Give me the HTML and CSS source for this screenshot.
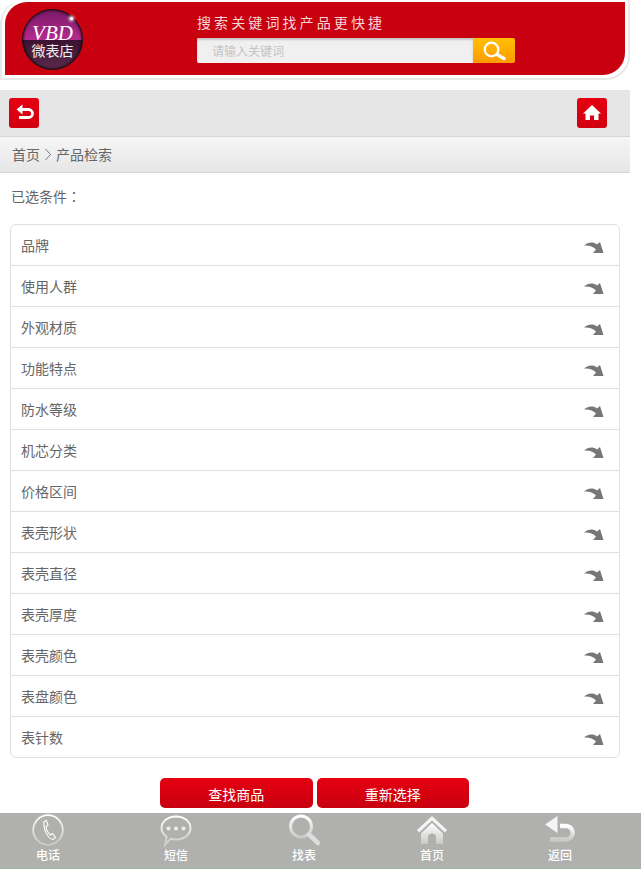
FILE: index.html
```html
<!DOCTYPE html>
<html lang="zh">
<head>
<meta charset="utf-8">
<title>产品检索</title>
<link rel="stylesheet" href="styles.css">
</head>
<body>
<svg class="defs" width="0" height="0">
  <defs>
    <linearGradient id="tabfill" x1="0" y1="0" x2="0" y2="1">
      <stop offset="0" stop-color="#ffffff"/>
      <stop offset="1" stop-color="#c9c9c7"/>
    </linearGradient>
  </defs>
</svg>
<div class="page">
  <header class="header">
    <div class="banner">
      <div class="logo">
        <span class="logo-top">VBD</span>
        <span class="logo-bottom">微表店</span>
        <i class="logo-star"></i>
      </div>
      <div class="search">
        <div class="slogan">搜索关键词找产品更快捷</div>
        <div class="search-row">
          <div class="search-input">请输入关键词</div>
          <div class="search-btn">
            <svg width="30" height="22" viewBox="0 0 30 22"><circle cx="12.5" cy="9.5" r="6.8" fill="none" stroke="#fff" stroke-width="2.2"/><path d="M18 14.500L25 18.500" stroke="#fff" stroke-width="3.400" stroke-linecap="round"/></svg>
          </div>
        </div>
      </div>
    </div>
  </header>

  <nav class="toolbar">
    <a class="tool-btn"><svg width="30" height="30" viewBox="0 0 30 30"><path d="M11 11.500H19.500A4 4 0 0 1 19.500 19.500H10" fill="none" stroke="#fff" stroke-width="2.800"/><path d="M13.500 6.500V16.500L7.500 11.500Z" fill="#fff"/></svg></a>
    <a class="tool-btn"><svg width="30" height="30" viewBox="0 0 30 30"><path d="M15 7L24 15.500H21.500V22H17V17.500H13V22H8.500V15.500H6Z" fill="#fff"/></svg></a>
  </nav>

  <div class="crumb"><span>首页</span><svg class="crumb-sep" width="8" height="13" viewBox="0 0 8 13"><path d="M1.500 1L6.500 6.500L1.500 12" fill="none" stroke="#777" stroke-width="1"/></svg><span>产品检索</span></div>

  <div class="chosen">已选条件<span class="colon" lang="zh-Hant">：</span></div>

  <ul class="filters">
    <li class="filter"><span>品牌</span><svg class="arrow" width="20" height="13" viewBox="0 0 20 13"><path d="M0 4.500C4 1 9 .5 13 3.500L16 1L19.500 12L9 12L12 8.500C9 5.500 5 4 0 4.500Z"/></svg></li>
    <li class="filter"><span>使用人群</span><svg class="arrow" width="20" height="13" viewBox="0 0 20 13"><path d="M0 4.500C4 1 9 .5 13 3.500L16 1L19.500 12L9 12L12 8.500C9 5.500 5 4 0 4.500Z"/></svg></li>
    <li class="filter"><span>外观材质</span><svg class="arrow" width="20" height="13" viewBox="0 0 20 13"><path d="M0 4.500C4 1 9 .5 13 3.500L16 1L19.500 12L9 12L12 8.500C9 5.500 5 4 0 4.500Z"/></svg></li>
    <li class="filter"><span>功能特点</span><svg class="arrow" width="20" height="13" viewBox="0 0 20 13"><path d="M0 4.500C4 1 9 .5 13 3.500L16 1L19.500 12L9 12L12 8.500C9 5.500 5 4 0 4.500Z"/></svg></li>
    <li class="filter"><span>防水等级</span><svg class="arrow" width="20" height="13" viewBox="0 0 20 13"><path d="M0 4.500C4 1 9 .5 13 3.500L16 1L19.500 12L9 12L12 8.500C9 5.500 5 4 0 4.500Z"/></svg></li>
    <li class="filter"><span>机芯分类</span><svg class="arrow" width="20" height="13" viewBox="0 0 20 13"><path d="M0 4.500C4 1 9 .5 13 3.500L16 1L19.500 12L9 12L12 8.500C9 5.500 5 4 0 4.500Z"/></svg></li>
    <li class="filter"><span>价格区间</span><svg class="arrow" width="20" height="13" viewBox="0 0 20 13"><path d="M0 4.500C4 1 9 .5 13 3.500L16 1L19.500 12L9 12L12 8.500C9 5.500 5 4 0 4.500Z"/></svg></li>
    <li class="filter"><span>表壳形状</span><svg class="arrow" width="20" height="13" viewBox="0 0 20 13"><path d="M0 4.500C4 1 9 .5 13 3.500L16 1L19.500 12L9 12L12 8.500C9 5.500 5 4 0 4.500Z"/></svg></li>
    <li class="filter"><span>表壳直径</span><svg class="arrow" width="20" height="13" viewBox="0 0 20 13"><path d="M0 4.500C4 1 9 .5 13 3.500L16 1L19.500 12L9 12L12 8.500C9 5.500 5 4 0 4.500Z"/></svg></li>
    <li class="filter"><span>表壳厚度</span><svg class="arrow" width="20" height="13" viewBox="0 0 20 13"><path d="M0 4.500C4 1 9 .5 13 3.500L16 1L19.500 12L9 12L12 8.500C9 5.500 5 4 0 4.500Z"/></svg></li>
    <li class="filter"><span>表壳颜色</span><svg class="arrow" width="20" height="13" viewBox="0 0 20 13"><path d="M0 4.500C4 1 9 .5 13 3.500L16 1L19.500 12L9 12L12 8.500C9 5.500 5 4 0 4.500Z"/></svg></li>
    <li class="filter"><span>表盘颜色</span><svg class="arrow" width="20" height="13" viewBox="0 0 20 13"><path d="M0 4.500C4 1 9 .5 13 3.500L16 1L19.500 12L9 12L12 8.500C9 5.500 5 4 0 4.500Z"/></svg></li>
    <li class="filter"><span>表针数</span><svg class="arrow" width="20" height="13" viewBox="0 0 20 13"><path d="M0 4.500C4 1 9 .5 13 3.500L16 1L19.500 12L9 12L12 8.500C9 5.500 5 4 0 4.500Z"/></svg></li>
  </ul>

  <div class="actions">
    <a class="action">查找商品</a>
    <a class="action">重新选择</a>
  </div>
</div>

<footer class="tabbar">
  <a class="tab">
    <svg width="36" height="34" viewBox="0 0 36 34"><circle cx="18" cy="17" r="14.800" fill="none" stroke="url(#tabfill)" stroke-width="1.800"/><path d="M14 8.500L16.500 7.500L18 12L16 13.500C16.500 17 18 20 20.500 22L22.500 20.500L25.500 24.500L23 26.500C18 26 13 16 14 8.500Z" fill="none" stroke="#fff" stroke-width="1.100"/></svg>
    <span>电话</span>
  </a>
  <a class="tab">
    <svg width="36" height="34" viewBox="0 0 36 34"><path d="M18 3.500C26 3.500 32.500 8.500 32.500 15C32.500 21.500 26 26.500 18 26.500C15.500 26.500 14 26.300 12.500 25.800L7 32L8.500 23.500C5.500 21.500 3.500 18.500 3.500 15C3.500 8.500 10 3.500 18 3.500Z" fill="none" stroke="url(#tabfill)" stroke-width="2"/><circle cx="10.500" cy="15.500" r="2" fill="#eee"/><circle cx="18" cy="15.500" r="2" fill="#eee"/><circle cx="25.500" cy="15.500" r="2" fill="#eee"/></svg>
    <span>短信</span>
  </a>
  <a class="tab">
    <svg width="36" height="34" viewBox="0 0 36 34"><circle cx="15" cy="13.500" r="10.500" fill="none" stroke="url(#tabfill)" stroke-width="3"/><path d="M23 21.500L32 30" stroke="#ddd" stroke-width="4.500" stroke-linecap="round"/></svg>
    <span>找表</span>
  </a>
  <a class="tab">
    <svg width="36" height="34" viewBox="0 0 36 34"><path d="M18 3L33 17L31 19.500L18 7.500L5 19.500L3 17Z" fill="#f4f4f4"/><path d="M18 10L29 20.500V31H22V24.500A4 4 0 0 0 14 24.500V31H7V20.500Z" fill="url(#tabfill)"/></svg>
    <span>首页</span>
  </a>
  <a class="tab">
    <svg width="36" height="34" viewBox="0 0 36 34"><path d="M18 13H24A6.500 6.500 0 0 1 24 26.500H8" fill="none" stroke="url(#tabfill)" stroke-width="4.500"/><path d="M15.500 3V20L3 11.500Z" fill="#f4f4f4"/></svg>
    <span>返回</span>
  </a>
</footer>
</body>
</html>
```
FILE: styles.css
```css
* { box-sizing: border-box; }
html, body { margin: 0; padding: 0; background: #fff; overflow: hidden; }
body {
  font-family: "Noto Sans CJK SC", "Liberation Sans", sans-serif;
  font-size: 14px;
  color: #666;
  height: 869px;
}
.defs { position: absolute; }
.page { width: 630px; }

.header {
  height: 80px;
  padding: 2px 3px 3px 3px;
  border: 1px solid #e8e8e8;
  border-width: 0 2px 2px 2px;
  border-radius: 24px 0 24px 0;
}
.banner {
  height: 73px;
  background: #c80010;
  border-radius: 22px 0 22px 0;
  display: flex;
  padding-left: 17px;
}
.logo {
  position: relative;
  width: 61px;
  height: 61px;
  margin-top: 7px;
  border-radius: 50%;
  border: 1px solid #111;
  background: linear-gradient(#7a1a68 0, #b52a8e 50%, #3c1232 51%, #5c2a4c 100%);
  box-shadow: inset 0 0 3px #000;
  display: flex;
  flex-direction: column;
  align-items: center;
  color: #fff;
}
.logo-top {
  font-family: "Liberation Serif", serif;
  font-style: italic;
  font-size: 21px;
  line-height: 20px;
  margin-top: 13px;
}
.logo-bottom { font-size: 14px; line-height: 14px; color: #eee; }
.logo-star {
  position: absolute;
  top: 7px;
  right: 9px;
  width: 3px;
  height: 3px;
  border-radius: 50%;
  background: #fff;
  box-shadow: 0 0 3px 1px #fff;
}

.search { margin-left: 114px; width: 318px; }
.slogan {
  height: 36px;
  padding-top: 9px;
  font-size: 14px;
  line-height: 22px;
  letter-spacing: 3.100px;
  color: #f6d5d8;
}
.search-row { display: flex; height: 25px; }
.search-input {
  width: 276px;
  padding-left: 15px;
  font-size: 12px;
  line-height: 25px;
  color: #c4c4c4;
  background: #f0f0f0;
  border-radius: 2px 0 0 2px;
  box-shadow: inset 0 2px 2px #c4c4c4;
}
.search-btn {
  width: 42px;
  background: linear-gradient(#ffc000, #ff9a00);
  border-radius: 0 2px 2px 0;
  padding: 2px 0 0 6px;
}
.search-btn svg { display: block; }

.toolbar {
  margin-top: 10px;
  height: 46px;
  background: #e6e6e6;
  display: flex;
  justify-content: space-between;
  padding: 8px 23px 0 9px;
}
.tool-btn {
  width: 30px;
  height: 30px;
  border-radius: 3px;
  background: linear-gradient(#e60012, #d00010);
}
.tool-btn svg { display: block; }

.crumb {
  height: 37px;
  padding: 0 0 2px 12px;
  border-top: 1px solid #d6d6d6;
  border-bottom: 1px solid #d6d6d6;
  background: linear-gradient(#f6f6f6, #e6e6e6);
  display: flex;
  align-items: center;
  gap: 4px;
}
.crumb-sep { display: block; margin-top: 1px; }

.chosen {
  height: 51px;
  padding: 13px 0 0 11px;
  line-height: 20px;
}
.colon { font-family: "Noto Sans CJK TC", sans-serif; }

.filters {
  margin: 0 10px;
  padding: 0;
  list-style: none;
  border: 1px solid #e0e0e0;
  border-radius: 6px;
}
.filter {
  height: 41px;
  padding: 0 15px 0 10px;
  display: flex;
  align-items: center;
  justify-content: space-between;
  border-bottom: 1px solid #e0e0e0;
}
.filter:last-child { height: 40px; border-bottom: 0; }
.arrow { fill: #777; margin-top: 4px; display: block; }

.actions {
  margin-top: 20px;
  margin-left: 160px;
  width: 309px;
  display: flex;
  gap: 4px;
}
.action {
  flex: 1;
  height: 30px;
  border-radius: 5px;
  background: linear-gradient(#e60012, #c8000f);
  color: #fff;
  text-align: center;
  line-height: 33px;
  font-size: 14px;
}

.tabbar {
  position: fixed;
  left: 0;
  right: 0;
  bottom: 0;
  height: 56px;
  background: #b0b0ae;
  border-bottom: 1px solid #9db8a4;
  display: flex;
  gap: 32px;
}
.tab {
  width: 96px;
  display: flex;
  flex-direction: column;
  align-items: center;
  color: #fff;
  font-size: 12px;
  font-weight: 500;
  line-height: 16px;
}
.tab svg { display: block; height: 34px; }
```
